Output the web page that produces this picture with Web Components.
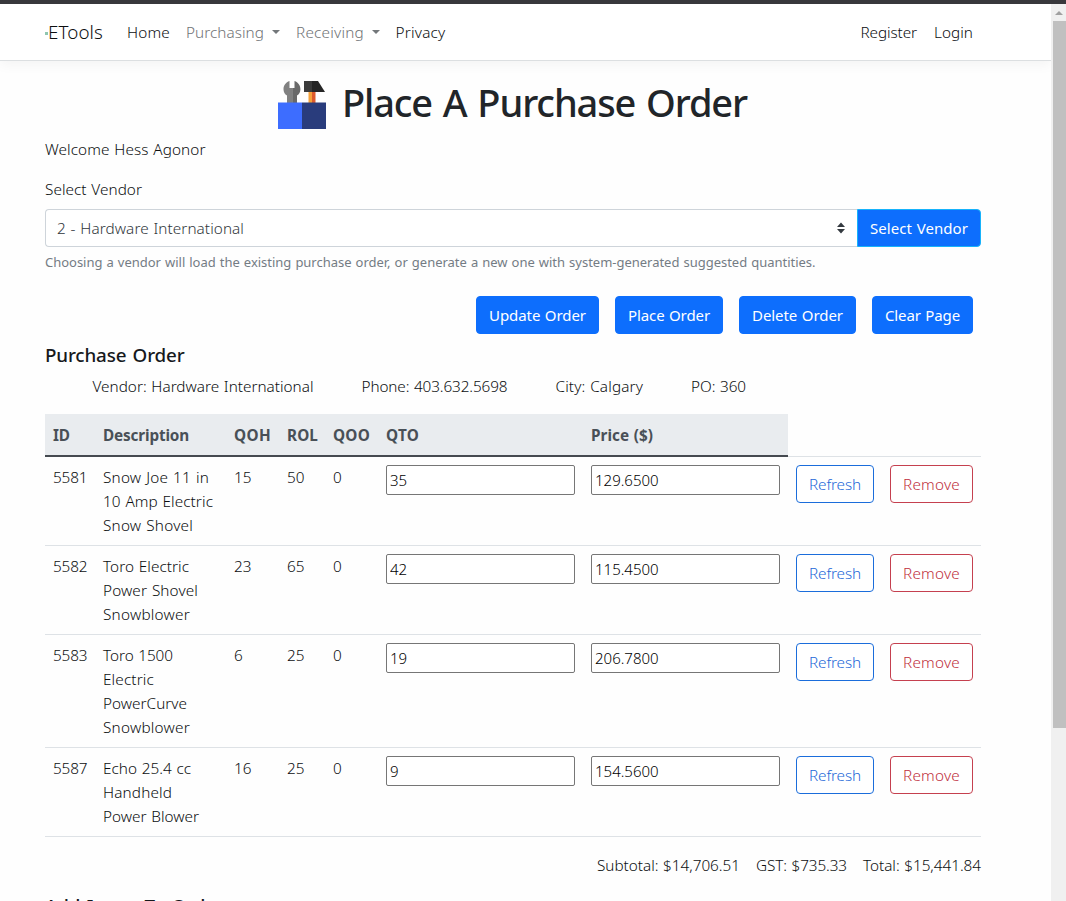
<!DOCTYPE html>
<html lang="en">
<head>
<meta charset="utf-8">
<title>Place A Purchase Order - ETools</title>
<style>
html,body{margin:0;height:100%;overflow:hidden}
body{font:300 15.3px/24px "Noto Sans","Open Sans",sans-serif;color:#0c0e10;background:#fefefe;word-spacing:.7px}
</style>
</head>
<body>
<etools-app></etools-app>
<script>
const define = (name, html, setup) => customElements.define(name, class extends HTMLElement {
  connectedCallback() {
    if (this.shadowRoot) return;
    this.attachShadow({mode: 'open'}).innerHTML = html;
    if (setup) setup.call(this, this.shadowRoot);
  }
});

/* One line of text tracked to a given width (w, in px). */
define('fit-text', `<style>:host{display:inline-block;white-space:nowrap}span{display:inline-block}</style><span><slot></slot></span>`, function (root) {
  const w = +this.getAttribute('w'), span = root.querySelector('span');
  if (!w) return;
  const natural = span.getBoundingClientRect().width;
  span.style.letterSpacing = (w - natural) / this.textContent.length + 'px';
  this.style.width = w + 'px';
});

define('et-button', `<style>
:host{display:block;height:38px;box-sizing:border-box;border:1px solid #0d6efd;border-radius:4px;background:#0d6efd;color:#fff;font-weight:400;font-size:15px}
button{all:unset;display:flex;width:100%;height:36px;align-items:center;justify-content:center;cursor:pointer}
:host([kind=refresh]){background:#fff;color:#2468d8;border-color:#1b6ddb;font-weight:300;font-size:15.3px}
:host([kind=remove]){background:#fff;color:#c02f40;border-color:#c5404f;font-weight:300;font-size:15.3px}
:host([kind=append]){border-radius:0 4px 4px 0;border-color:#17b3fb}
</style><button><slot></slot></button>`);

define('et-nav', `<style>
:host{display:flex;height:56px;padding:0 78px 0 45px;align-items:center;border-bottom:1px solid #dcdfe1;background:#fff;box-shadow:0 4px 12px rgba(0,0,0,.045);flex:none}
.brand{display:flex;align-items:center;font-size:18.8px;width:82px}
.brand i{width:3px;height:3px;background:#8fc6b0;margin-top:2px}
a{display:flex;align-items:center}
.m{color:#707376}
.m:after{content:"";border:4.5px solid transparent;border-top-color:#73777a;border-bottom:0;margin-left:8px}
.reg{margin-left:auto;margin-right:17px}
</style>
<div class="brand"><i></i><fit-text w="55">ETools</fit-text></div>
<a style="margin-right:16px"><fit-text w="43">Home</fit-text></a>
<a class="m" style="margin-right:16px"><fit-text w="78">Purchasing</fit-text></a>
<a class="m" style="margin-right:15.500px"><fit-text w="68">Receiving</fit-text></a>
<a><fit-text w="50">Privacy</fit-text></a>
<a class="reg"><fit-text w="56.5">Register</fit-text></a><a><fit-text w="39">Login</fit-text></a>`);

define('tool-icon', `<style>:host,svg{display:block;width:48px;height:48px}</style>
<svg viewBox="0 0 48 48"><path fill="#808080" d="M11.500 0v7h2.700V22H9V14.500C6.800 13.200 5.500 11 5.500 8.200 5.500 4.500 7.800 1.300 11.500 0z"/><path fill="#696969" d="M16.500 0v7h-2.300v15H19v-7.500c2.200-1.300 3.400-3.500 3.400-6.300C22.400 4.500 20.200 1.300 16.500 0z"/>
<path fill="#f5a13a" d="M30.500 10.500H34V22h-3.500z"/><path fill="#de5a2c" d="M34 10.500h3.500V22H34z"/><path fill="#3b3b3b" d="M26 0h8v11h-8z"/><path fill="#262626" d="M34 0h6l7 11H34z"/>
<path fill="#3d6dff" d="M0 21.500h24V48H0z"/><path fill="#293c7c" d="M24 21.500h24V48H24z"/></svg>`);

define('vendor-select', `<style>
:host{display:grid;grid-template-columns:812px 124px;margin-top:8px}
.s{display:flex;align-items:center;justify-content:space-between;box-sizing:border-box;height:38px;padding:0 11px 0 11px;border:1px solid #ced4da;border-right:0;border-radius:4px 0 0 4px;color:#30363b;background:#fff}
svg{display:block}
</style><div class="s"><fit-text w="187">2 - Hardware International</fit-text><svg width="10" height="12"><path fill="#343a40" d="M1 5l4-4.500L9 5zM1 7h8l-4 4.500z"/></svg></div>
<et-button kind="append"><fit-text w="98">Select Vendor</fit-text></et-button>`);

define('order-row', `<style>
:host{display:grid;grid-template-columns:50px 131px 53px 46px 53px 205px 205px 94px 99px;border-top:1px solid #dee2e6}
:host>*{padding:8px 8px}
.d fit-text{display:block}
input{display:block;box-sizing:border-box;width:189px;height:30px;margin:0;border:1px solid #767676;border-radius:2px;padding:1px 3px;font:300 15px "Noto Sans","Open Sans",sans-serif;color:#000;background:#fff;outline:0}
</style><div class="id"></div><div class="d"></div><div class="h"></div><div class="r"></div><div>0</div>
<div><input class="q"></div><div><input class="p"></div>
<div><et-button kind="refresh"><fit-text w="52">Refresh</fit-text></et-button></div>
<div><et-button kind="remove"><fit-text w="57">Remove</fit-text></et-button></div>`, function (root) {
  const g = n => this.getAttribute(n), q = s => root.querySelector(s);
  q('.id').innerHTML = `<fit-text w="34.5">${g('code')}</fit-text>`; q('.h').textContent = g('qoh'); q('.r').textContent = g('rol');
  q('.q').value = g('qto'); q('.p').value = g('price');
  q('.d').innerHTML = g('lines').split('|').map(l => { const [t, w] = l.split('='); return `<fit-text w="${w}">${t}</fit-text>`; }).join('');
});

define('order-table', `<style>
:host{display:block;border-bottom:1px solid #dee2e6}
.head{display:grid;grid-template-columns:50px 131px 53px 46px 53px 205px 205px;width:743px;height:41px;margin-bottom:-1px;position:relative;background:#e9ecef;border-bottom:2px solid #454a50;color:#495057;font-weight:700;align-items:center}
.head>*{margin-left:8px;padding-top:1px}
</style><div class="head"><fit-text w="17">ID</fit-text><fit-text w="86">Description</fit-text><fit-text w="37">QOH</fit-text><fit-text w="31">ROL</fit-text><fit-text w="37">QOO</fit-text><fit-text w="33">QTO</fit-text><fit-text w="62">Price ($)</fit-text></div>
<order-row code="5581" qoh="15" rol="50" qto="35" price="129.6500" lines="Snow Joe 11 in=106|10 Amp Electric=110|Snow Shovel=90"></order-row>
<order-row code="5582" qoh="23" rol="65" qto="42" price="115.4500" lines="Toro Electric=86|Power Shovel=95|Snowblower=87"></order-row>
<order-row code="5583" qoh="6" rol="25" qto="19" price="206.7800" lines="Toro 1500=70|Electric=51|PowerCurve=84|Snowblower=87"></order-row>
<order-row code="5587" qoh="16" rol="25" qto="9" price="154.5600" lines="Echo 25.4 cc=88|Handheld=69|Power Blower=96"></order-row>`);

define('scroll-bar', `<style>
:host{display:flex;flex-direction:column;width:15px;background:#f0f0f0;flex:none}
.up{height:17px;display:flex;align-items:center;justify-content:center}
.up:after{content:"";border:4px solid transparent;border-bottom-color:#a0a0a0;border-top:0}
.thumb{height:707px;margin-left:2px;background:#c0c0c0}
</style><div class="up"></div><div class="thumb"></div>`);

define('etools-app', `<style>
:host{display:flex;flex-direction:column;height:901px;width:1066px;overflow:hidden}
.chrome{height:4px;background:#38383c;flex:none}
.view{display:flex;flex:1;min-height:0}
.page{width:1051px;flex:none;overflow:hidden;display:flex;flex-direction:column}
main{padding:20px 0 0 45px;width:936px}
h1{display:flex;align-items:center;justify-content:center;gap:16px;margin:0 1px 0 0;height:48px;font-size:38px;font-weight:500;line-height:48px;word-spacing:2px;color:#212529}
h1 fit-text{margin-top:-6px}
p{margin:0}
.help{font-size:13px;font-weight:400;color:#747c84;line-height:21px;margin-top:5px}
.actions{display:flex;gap:16px;justify-content:flex-end;padding-right:8px;margin-top:23px}
h2{font-size:18.8px;font-weight:500;line-height:24px;margin:0;word-spacing:1.5px;color:#16191c}
.info{display:flex;gap:48px;padding-left:47.500px;margin:7px 0 16px}
.totals{display:flex;gap:16px;justify-content:flex-end;margin:16px 0 17px}
</style>
<div class="chrome"></div>
<div class="view"><div class="page"><et-nav></et-nav>
<main>
<h1><tool-icon></tool-icon><fit-text w="405">Place A Purchase Order</fit-text></h1>
<p style="margin-top:8px"><fit-text w="160.5">Welcome Hess Agonor</fit-text></p>
<p style="margin-top:16px"><fit-text w="97">Select Vendor</fit-text></p>
<vendor-select></vendor-select>
<p class="help"><fit-text w="770.5">Choosing a vendor will load the existing purchase order, or generate a new one with system-generated suggested quantities.</fit-text></p>
<div class="actions">
<et-button style="width:123px"><fit-text w="97">Update Order</fit-text></et-button>
<et-button style="width:108px"><fit-text w="82">Place Order</fit-text></et-button>
<et-button style="width:117px"><fit-text w="91">Delete Order</fit-text></et-button>
<et-button style="width:101px"><fit-text w="75">Clear Page</fit-text></et-button></div>
<h2 style="margin-top:9px"><fit-text w="139.5">Purchase Order</fit-text></h2>
<div class="info"><fit-text w="221">Vendor: Hardware International</fit-text><fit-text w="146">Phone: 403.632.5698</fit-text><fit-text w="87.5">City: Calgary</fit-text><fit-text w="55">PO: 360</fit-text></div>
<order-table></order-table>
<div class="totals"><fit-text w="143">Subtotal: $14,706.51</fit-text><fit-text w="91">GST: $735.33</fit-text><fit-text w="118">Total: $15,441.84</fit-text></div>
<h2><fit-text w="179">Add Items To Order</fit-text></h2>
</main></div><scroll-bar></scroll-bar></div>`);
</script>
</body>
</html>
